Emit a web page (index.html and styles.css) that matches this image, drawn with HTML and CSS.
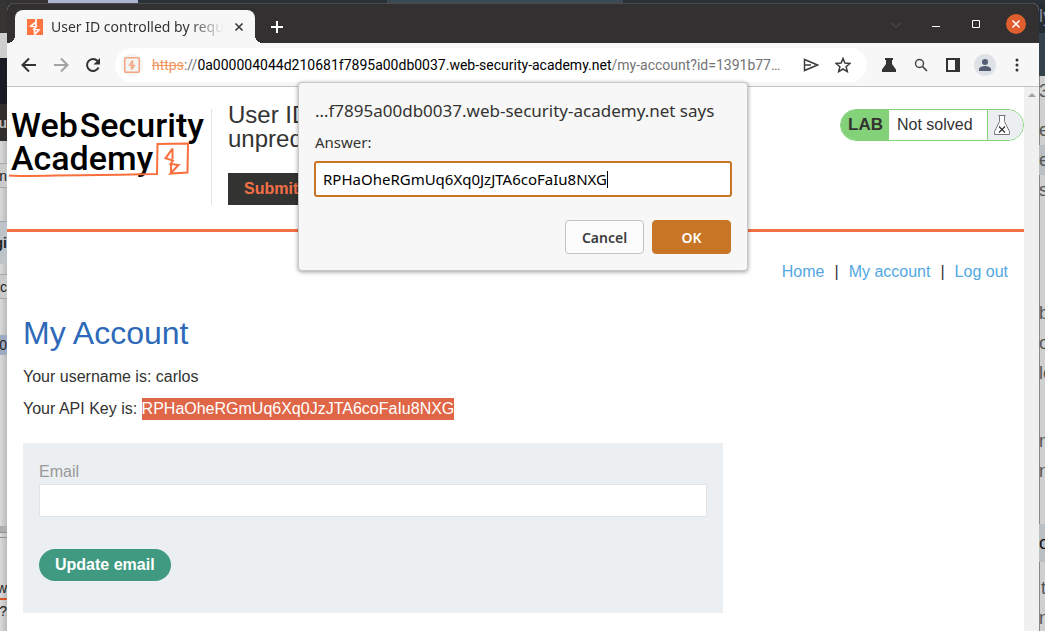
FILE: index.html
```
<!DOCTYPE html>
<html lang="en">
<head>
<meta charset="utf-8">
<title>User ID controlled by request parameter</title>
<link rel="stylesheet" href="styles.css">
</head>
<body>
<div class="desktop">
  <div class="backdrop"><span class="strip-a"></span><span class="strip-b"></span><span class="strip-c"></span></div>
  <div class="side side-left" aria-hidden="true">
    <span class="l-charcoal"></span><span class="l-light"></span><span class="l-navy"></span>
    <span class="l-tab">u</span><span class="l-row"></span><span class="l-row l-line">n</span><span class="l-row l-tall"></span>
    <span class="l-head">gi</span><span class="l-row l-short"></span><span class="l-row l-line">c</span><span class="l-row"></span>
    <span class="l-select">40</span><span class="l-fill"></span><span class="l-bar"></span><span class="l-rule"></span><span class="l-space"></span>
    <span class="l-orange">w</span><span class="l-foot">?</span>
  </div>

  <main class="window">
    <header class="titlebar">
      <div class="tab">
        <svg class="favicon" viewBox="0 0 16 16"><rect width="16" height="16" fill="#ff7440"/><path d="M9 0v3L4 7l5 1-2 2 5 1-5 5M9 2v5M7.500 9.500V14" fill="none" stroke="#fff" stroke-width="1.700"/></svg>
        <span class="tab-title">User ID controlled by requ</span>
        <button class="plain tab-close" aria-label="Close tab"><svg width="10" height="10" viewBox="0 0 10 10"><path d="m1.500 1.500 7 7m0-7-7 7" stroke="#3c3c3c" stroke-width="1.700"/></svg></button>
      </div>
      <button class="plain new-tab" aria-label="New tab"><svg width="12" height="12" viewBox="0 0 12 12"><path d="M6 0v12M0 6h12" stroke="#fff" stroke-width="2"/></svg></button>
      <div class="window-controls">
        <button class="plain control" aria-label="Search tabs"><svg width="12" height="8" viewBox="0 0 12 8"><path d="m1 3 5 4 5-4" fill="none" stroke="#484546" stroke-width="1.500"/></svg></button>
        <button class="plain control" aria-label="Minimize"><svg width="8" height="8" viewBox="0 0 8 8"><path d="M0 6.500h8" stroke="#fff"/></svg></button>
        <button class="plain control" aria-label="Maximize"><svg width="8" height="8" viewBox="0 0 8 8"><path d="M.5.5h7v7h-7z" fill="none" stroke="#fff"/></svg></button>
        <button class="plain control" aria-label="Close"><svg width="20" height="20" viewBox="0 0 20 20"><circle cx="10" cy="10" r="10" fill="#de5f2d"/><path d="m6.500 6.500 7 7m0-7-7 7" stroke="#fff" stroke-width="1.500"/></svg></button>
      </div>
    </header>

    <div class="toolbar">
      <button class="plain tool" aria-label="Back"><svg width="16" height="16" viewBox="0 0 16 16"><path d="M15 8H2M8 1.500 1.500 8 8 14.500" fill="none" stroke="#333" stroke-width="2"/></svg></button>
      <button class="plain tool" aria-label="Forward"><svg width="16" height="16" viewBox="0 0 16 16"><path d="M1 8h13M8 1.500 14.500 8 8 14.500" fill="none" stroke="#a2a2a2" stroke-width="2"/></svg></button>
      <button class="plain tool" aria-label="Reload"><svg width="16" height="16" viewBox="0 0 16 16"><path d="M13.500 10.500A6 6 0 1 1 12.500 4" fill="none" stroke="#333" stroke-width="2"/><path d="M15 1v6.500H8.500z" fill="#333"/></svg></button>
      <div class="address">
        <span class="site"><svg width="16" height="16" viewBox="0 0 16 16"><rect x=".75" y=".75" width="14.500" height="14.500" rx="1" fill="none" stroke="#f2a57e" stroke-width="1.500"/><path d="M8.500 3.500 5.500 8l5 .5-3 4M8.500 3.500V8M7.500 8.500v4" fill="none" stroke="#f2a57e" stroke-width="1.300"/></svg></span>
        <span class="url"><s>https</s>://<b>0a000004044d210681f7895a00db0037.web-security-academy.net</b>/my-account?id=1391b77…</span>
        <button class="plain tool" aria-label="Share"><svg width="16" height="16" viewBox="0 0 16 16"><path d="M1.500 2.500 14.500 8l-13 5.500zM1.500 8H8" fill="none" stroke="#3c3c3c" stroke-width="1.500"/></svg></button>
        <button class="plain tool" aria-label="Bookmark"><svg width="16" height="16" viewBox="0 0 16 16"><path d="m8 1.500 1.900 4.600 5 .4-3.800 3.200 1.200 4.900L8 12l-4.300 2.600 1.200-4.900-3.800-3.200 5-.4z" fill="none" stroke="#3c3c3c" stroke-width="1.500"/></svg></button>
      </div>
      <button class="plain tool" aria-label="Labs"><svg width="16" height="16" viewBox="0 0 16 16"><path d="M4 1h8v2h-1v4l4 5.500V15H1v-2.500L5 7V3H4z" fill="#333"/></svg></button>
      <button class="plain tool" aria-label="Search"><svg width="14" height="14" viewBox="0 0 14 14"><circle cx="5.500" cy="5.500" r="4" fill="none" stroke="#444" stroke-width="1.500"/><path d="m8.500 8.500 4.500 4.500" stroke="#444" stroke-width="1.700"/></svg></button>
      <button class="plain tool" aria-label="Side panel"><svg width="14" height="14" viewBox="0 0 14 14"><path d="M0 0h14v14H0zM2 2v10h7V2z" fill="#333" fill-rule="evenodd"/></svg></button>
      <button class="plain tool" aria-label="Profile"><svg width="22" height="22" viewBox="0 0 22 22"><circle cx="11" cy="11" r="11" fill="#dee1e6"/><circle cx="11" cy="8" r="3" fill="#545d74"/><path d="M5 17v-2c0-2 4-3 6-3s6 1 6 3v2z" fill="#545d74"/></svg></button>
      <button class="plain tool" aria-label="Menu"><svg width="4" height="14" viewBox="0 0 4 14"><circle cx="2" cy="2" r="1.500" fill="#333"/><circle cx="2" cy="7" r="1.500" fill="#333"/><circle cx="2" cy="12" r="1.500" fill="#333"/></svg></button>
    </div>

    <div class="viewport">
      <div class="page">
        <section class="lab-header">
          <div class="logo">
            <div class="logo-line"><span>Web</span><span>Security</span></div>
            <div class="logo-line"><span>Academy</span></div>
            <svg class="logo-mark" width="182" height="38" viewBox="0 0 182 38"><path d="M0 33.500C20 35 50 33 90 33s40-1 58-1l.5-30 30.500-.5-.5 29-17 1 8-8.500-8-1 2.500-3.500-7.500-2.200 7.200-10M163.500 7v10M162 22.500v9" fill="none" stroke="#f9703e" stroke-width="2"/></svg>
          </div>
          <div class="lab-info">
            <h2>User ID<br>unpred</h2>
            <button class="submit">Submit</button>
          </div>
          <div class="status"><strong>LAB</strong><span>Not solved</span>
            <i><svg width="16" height="20" viewBox="0 0 16 20"><path d="M4.500.5h7M5.500.5v6l-5 10v3h15v-3l-5-10v-6" fill="#fff" stroke="#777"/><path d="m5 11.500 6 6m0-6-6 6" stroke="#333" stroke-width="1.300"/></svg></i>
          </div>
        </section>
        <section class="content">
          <nav><a href="#">Home</a><span>|</span><a href="#">My account</a><span>|</span><a href="#">Log out</a></nav>
          <h1>My Account</h1>
          <p>Your username is: carlos</p>
          <p>Your API Key is: <mark>RPHaOheRGmUq6Xq0JzJTA6coFaIu8NXG</mark></p>
          <form class="email-form">
            <label for="email">Email</label>
            <input id="email" type="email">
            <button type="button">Update email</button>
          </form>
        </section>
      </div>
      <div class="scrollbar"><svg width="8" height="4" viewBox="0 0 8 4"><path d="M4 0 8 4H0z" fill="#a3a3a3"/></svg></div>
    </div>

    <div class="prompt" role="dialog" aria-labelledby="prompt-title">
      <h3 id="prompt-title">…f7895a00db0037.web-security-academy.net says</h3>
      <label for="answer">Answer:</label>
      <div class="answer-field"><input id="answer" type="text" value="RPHaOheRGmUq6Xq0JzJTA6coFaIu8NXG"><span class="caret"></span></div>
      <div class="actions"><button>Cancel</button><button class="ok">OK</button></div>
    </div>
  </main>

  <div class="side side-right" aria-hidden="true">
    <span class="r-dark">ly</span><span class="r-teal"></span>
    <span class="r-line r-first">3</span><span class="r-gap-s"></span><span class="r-line">e</span><span class="r-line r-mark">e</span><span class="r-line">s</span>
    <span class="r-gap-l"></span><span class="r-line">b</span><span class="r-line">o</span><span class="r-line">lo</span>
    <span class="r-gap-m"></span><span class="r-line">m</span><span class="r-line">ni</span>
    <span class="r-gap-m"></span><span class="r-line r-mark r-tall">o</span><span class="r-gap-s"></span><span class="r-line r-indent">t</span><span class="r-line">n</span>
  </div>
</div>
</body>
</html>
```
FILE: styles.css
```
* { box-sizing: border-box; }
body { margin: 0; font: 16px "Liberation Sans", Arial, sans-serif; color: #333332; }
button, input { font: inherit; margin: 0; }
svg { display: block; }
.plain { border: 0; padding: 0; background: none; display: flex; align-items: center; justify-content: center; }

.desktop { height: 100vh; overflow: hidden; display: grid; grid-template-columns: 7px minmax(0, 1fr) 6px; grid-template-rows: 3px minmax(0, 1fr); background: #2a3137; }
.backdrop { grid-column: 1 / -1; display: flex; }
.backdrop span { height: 3px; }
.strip-a { width: 48px; background: #343332; }
.strip-b { width: 90px; background: #aab4cc; }
.strip-c { margin-left: 249px; width: 236px; background: #3a4952; }

.side { overflow: hidden; display: flex; flex-direction: column; font-size: 14px; line-height: 18px; color: #222; background: #d3d3d3; }
.side span { flex: none; white-space: nowrap; }
.side-left { background: linear-gradient(90deg, #dadada, #bababa); }
.side-left span { height: 22px; display: flex; justify-content: flex-end; align-items: center; }
.side-left .l-charcoal { height: 30px; background: #373534; }
.side-left .l-light { height: 25px; background: #cecece; }
.side-left .l-navy { height: 46px; background: #181b24; }
.side-left .l-tab { height: 37px; background: #302f2e; color: #bbb; font-weight: bold; }
.side-left .l-line { height: 25px; border: solid #a6a6a6; border-width: 1px 0; background: #cacaca; }
.side-left .l-tall { height: 34px; border-bottom: 1px solid #a6a6a6; }
.side-left .l-head { height: 42px; background: #bcc4ca; font-weight: bold; }
.side-left .l-short { height: 10px; }
.side-left .l-select { height: 20px; margin-top: 14px; background: #9ea9c2; }
.side-left .l-fill { height: 171px; }
.side-left .l-bar { height: 6px; background: #adadad; }
.side-left .l-rule { height: 6px; border: solid #909090; border-width: 1px 0; }
.side-left .l-space { height: 40px; }
.side-left .l-orange { border-bottom: 2px solid #d65526; }
.side-right { background: #d0d0d0; box-shadow: inset 1px 0 #888; color: #555; font-size: 18px; }
.side-right .r-dark { height: 30px; background: #232c33; color: #889; line-height: 26px; }
.side-right .r-teal { height: 43px; background: #34424b; }
.r-line { height: 30px; line-height: 30px; }
.side-right .r-first { height: 28px; }
.r-gap-s { height: 11px; }
.r-gap-m { height: 38px; }
.r-gap-l { height: 93px; }
.r-mark { background: #b9bfc3; }
.r-indent { padding-left: 2px; }
.side-right .r-tall { height: 38px; line-height: 38px; color: #111; }

.window { position: relative; display: flex; flex-direction: column; overflow: hidden; background: #f7f7f7; border-radius: 8px 8px 0 0; }
.titlebar { height: 40px; padding-left: 8px; padding-right: 3px; display: flex; background: #333031; border-top: 1px solid #4b4949; }
.tab { position: relative; display: flex; align-items: center; width: 240px; margin-top: 6px; padding: 0 11px 0 12px; background: #f7f7f7; border-radius: 8px 8px 0 0; font: 14px "Noto Sans", sans-serif; }
.tab::before, .tab::after { content: ""; position: absolute; bottom: 0; width: 8px; height: 8px; }
.tab::before { left: -8px; background: radial-gradient(circle at 0 0, #333031 8px, #f7f7f7 8px); }
.tab::after { right: -8px; background: radial-gradient(circle at 100% 0, #333031 8px, #f7f7f7 8px); }
.favicon { flex: none; width: 16px; height: 16px; margin-right: 8px; }
.tab-title { flex: 1; overflow: hidden; white-space: nowrap; margin-right: 10px; -webkit-mask-image: linear-gradient(90deg, #000 80%, transparent); mask-image: linear-gradient(90deg, #000 80%, transparent); }
.new-tab { width: 44px; padding-top: 6px; }
.window-controls { margin-left: auto; display: flex; }
.control { width: 40px; }

.toolbar { display: flex; align-items: center; height: 44px; padding: 0 6px; border-bottom: 1px solid #c3c3c3; }
.tool { flex: none; width: 32px; height: 32px; }
.address { flex: 1; min-width: 0; height: 34px; margin: 0 6px; padding: 0 8px 0 6px; display: flex; align-items: center; background: #fff; border-radius: 17px; }
.site { flex: none; display: grid; place-items: center; width: 22px; height: 22px; margin-right: 9px; border-radius: 50%; background: #f4f4f4; }
.url { flex: 1; min-width: 0; overflow: hidden; white-space: nowrap; font: 14px Roboto, sans-serif; color: #737373; }
.url s { color: #f2955f; }
.url b { font-weight: 400; color: #000; }

.viewport { flex: 1; min-height: 0; display: flex; }
.page { flex: 1; min-width: 0; background: #fff; }
.scrollbar { width: 15px; padding-top: 6px; background: #f0f0f0; }
.scrollbar svg { margin: 0 auto; }
.lab-header { display: flex; align-items: flex-start; height: 145px; padding-top: 22px; border-bottom: 3px solid #f37046; }
.logo { position: relative; width: 205px; height: 96px; padding-left: 4px; border-right: 1px solid #dfe2e6; }
.logo-line { display: flex; gap: 2px; font: 500 34px/33px Roboto, sans-serif; color: #000; }
.logo-mark { position: absolute; left: 2px; top: 33px; }
.lab-info { flex: 1; min-width: 0; padding-left: 16px; display: flex; flex-direction: column; align-items: flex-start; }
.lab-info h2 { height: 48px; margin: -6px 0 22px; font-size: 24px; line-height: 24px; font-weight: 400; }
.submit { height: 32px; padding: 0 16px; border: 0; background: #333332; color: #f37046; font-weight: bold; }
.status { display: flex; height: 32px; border: 1px solid #83d179; border-radius: 16px; overflow: hidden; line-height: 30px; }
.status strong { width: 48px; padding-left: 7px; background: #83d179; font-size: 17px; }
.status span { width: 98px; padding-left: 8px; }
.status i { width: 36px; padding: 5px 0 0 6px; border-left: 1px solid #83d179; background: #ebeff2; }

.content { padding: 28px 16px 0; }
nav { display: flex; justify-content: flex-end; gap: 10px; line-height: 24px; }
nav a { color: #52a8e2; text-decoration: none; }
h1 { margin: 29px 0 12px; font-size: 32px; line-height: 40px; font-weight: 400; color: #2d69b8; }
.content p { margin: 0 0 8px; line-height: 24px; }
mark { display: inline-block; line-height: 22px; background: #df6748; color: #fff; }
.email-form { max-width: 700px; margin-top: 22px; padding: 17px 16px 32px; background: #ebeff2; }
.email-form label { display: block; line-height: 24px; color: #999; }
.email-form input { display: block; width: 100%; height: 33px; margin: 0 0 32px; border: 1px solid #e1e3e5; background: #fff; }
.email-form button { height: 32px; padding: 0 16px; border: 0; border-radius: 16px; background: #409a82; color: #fff; font-weight: bold; }

.prompt { position: absolute; top: 79px; left: 0; right: 0; width: 450px; margin: 0 auto; padding: 16px; border: 1px solid #c8c8c8; border-radius: 4px; background: #f7f7f7; box-shadow: 0 1px 4px #0006; font-family: "Noto Sans", sans-serif; }
.prompt h3 { margin: 0 0 8px; font-size: 17px; line-height: 24px; font-weight: 400; white-space: nowrap; }
.prompt label { display: block; margin-bottom: 8px; font-size: 15px; line-height: 22px; }
.answer-field { display: flex; align-items: center; height: 36px; margin: 0 -1px 23px; padding-left: 7px; border: 2px solid #c97526; border-radius: 3px; background: #fff; }
.answer-field input { field-sizing: content; border: 0; padding: 0; background: none; outline: 0; font-size: 15px; line-height: 20px; color: #000; }
.caret { width: 1px; height: 17px; background: #000; }
.actions { display: flex; justify-content: flex-end; gap: 8px; }
.actions button { width: 79px; height: 34px; border: 1px solid #c3c3c3; border-radius: 4px; background: #fcfcfc; color: #3c3c3c; font-size: 14px; font-weight: 600; }
.actions .ok { border-color: #c97526; background: #c97526; color: #fff; }
```
